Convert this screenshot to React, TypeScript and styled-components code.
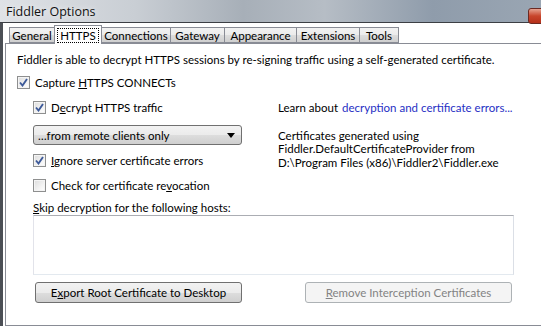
import styled, { createGlobalStyle } from 'styled-components';

const GlobalStyle = createGlobalStyle`
  html, body {
    margin: 0;
    padding: 0;
    background: #ffffff;
  }
  body {
    font-family: Lato, "Liberation Sans", sans-serif;
    font-size: 11.5px;
    color: #000;
  }
`;

const tabs = [
  { name: 'General', width: 46 },
  { name: 'HTTPS', width: 48 },
  { name: 'Connections', width: 70 },
  { name: 'Gateway', width: 55 },
  { name: 'Appearance', width: 73 },
  { name: 'Extensions', width: 64 },
  { name: 'Tools', width: 40 },
];

function Check({ checked }: { checked?: boolean }) {
  return (
    <Box>
      {checked && (
        <svg width="9" height="9" viewBox="0 0 9 9">
          <path d="M1 4.5 L3.5 7.5 L8 1" fill="none" stroke="#3d5a99" strokeWidth="1.9" />
        </svg>
      )}
    </Box>
  );
}

function App() {
  return (
    <Window>
      <GlobalStyle />
      <TitleBar>
        <Title>Fiddler Options</Title>
        <CloseButton />
      </TitleBar>
      <Body>
        <TabStrip>
          {tabs.map((t) => (
            <Tab key={t.name} $active={t.name === 'HTTPS'} $w={t.width}>
              {t.name === 'HTTPS' ? <Focus>{t.name}</Focus> : t.name}
            </Tab>
          ))}
        </TabStrip>
        <Panel>
          <Intro>
            Fiddler is able to decrypt HTTPS sessions by re-signing traffic using a self-generated certificate.
          </Intro>
          <CheckRow>
            <Check checked />
            <span>
              Capture <u>H</u>TTPS CONNECTs
            </span>
          </CheckRow>
          <Columns>
            <LeftCol>
              <CheckRow>
                <Check checked />
                <span>
                  D<u>e</u>crypt HTTPS traffic
                </span>
              </CheckRow>
              <Select>
                <span>…from remote clients only</span>
                <svg width="8" height="5" viewBox="0 0 8 5">
                  <path d="M0 0 H8 L4 5 Z" fill="#000" />
                </svg>
              </Select>
              <CheckRow>
                <Check checked />
                <span>
                  <u>I</u>gnore server certificate errors
                </span>
              </CheckRow>
              <CheckRow>
                <Check />
                <span>
                  Check for certificate re<u>v</u>ocation
                </span>
              </CheckRow>
            </LeftCol>
            <RightCol>
              <LearnLine>
                Learn about <Link>decryption and certificate errors...</Link>
              </LearnLine>
              <CertInfo>
                Certificates generated using
                <br />
                Fiddler.DefaultCertificateProvider from
                <br />
                D:\Program Files (x86)\Fiddler2\Fiddler.exe
              </CertInfo>
            </RightCol>
          </Columns>
          <Hosts>
            <Label>
              <u>S</u>kip decryption for the following hosts:
            </Label>
            <TextArea />
            <ButtonRow>
              <Button>
                E<u>x</u>port Root Certificate to Desktop
              </Button>
              <Button disabled>
                <u>R</u>emove Interception Certificates
              </Button>
            </ButtonRow>
          </Hosts>
        </Panel>
      </Body>
    </Window>
  );
}

export default App;

const Window = styled.div`
  width: 541px;
  height: 326px;
  overflow: hidden;
  display: flex;
  flex-direction: column;
  background: #fff;
`;

const TitleBar = styled.div`
  height: 22px;
  flex: none;
  display: flex;
  align-items: center;
  justify-content: space-between;
  background: linear-gradient(90deg, #dfe2e6 0%, #c9ced4 25%, #a7afb8 45%, #b6bdc5 60%, #8f9cab 80%, #9aa6b3 100%);
  border-bottom: 1px solid #3c3f44;
`;

const Title = styled.div`
  padding-left: 6px;
  font-family: "Open Sans", sans-serif;
  font-size: 12.5px;
  color: #111;
  text-shadow: 0 0 6px rgba(255, 255, 255, 0.9);
`;

const CloseButton = styled.div`
  width: 14px;
  height: 14px;
  margin-top: 10px;
  margin-right: -3px;
  border-radius: 3px;
  background: linear-gradient(180deg, #e6a290 0%, #c8452c 50%, #b5301a 100%);
  border: 1px solid #6b2a22;
`;

const Body = styled.div`
  flex: 1;
  display: flex;
  flex-direction: column;
  border-left: 3px solid #4b4f55;
  padding-left: 2px;
  padding-top: 1px;
`;

const TabStrip = styled.div`
  display: flex;
  align-items: flex-end;
  height: 19px;
  padding-left: 4px;
  position: relative;
  z-index: 1;
`;

const Tab = styled.div<{ $active?: boolean; $w: number }>`
  width: ${(p) => p.$w}px;
  box-sizing: border-box;
  height: ${(p) => (p.$active ? '19px' : '16px')};
  margin-bottom: ${(p) => (p.$active ? '-1px' : '0')};
  margin-left: -1px;
  display: flex;
  align-items: center;
  justify-content: center;
  border: 1px solid #898c95;
  border-bottom: ${(p) => (p.$active ? 'none' : '1px solid #898c95')};
  background: ${(p) => (p.$active ? '#fff' : 'linear-gradient(180deg, #f2f2f2 0%, #ebebeb 50%, #dddddd 51%, #cfcfcf 100%)')};
  position: relative;
  z-index: ${(p) => (p.$active ? 2 : 1)};
  &:first-child {
    margin-left: 0;
  }
`;

const Focus = styled.span`
  outline: 1px dotted #000;
  padding: 0 2px;
  line-height: 13px;
`;

const Panel = styled.div`
  flex: 1;
  width: 600px;
  border: 1px solid #898c95;
  padding: 8px 0 0 11px;
  box-sizing: border-box;
`;

const Intro = styled.div`
  height: 15px;
  line-height: 15px;
  white-space: nowrap;
  margin-bottom: 3px;
`;

const Box = styled.span`
  width: 11px;
  height: 11px;
  flex: none;
  border: 1px solid #8e8f8f;
  background: linear-gradient(135deg, #dcdcdc 0%, #f6f6f6 70%, #ffffff 100%);
  box-shadow: inset 0 0 0 1px #f4f4f4;
  display: flex;
  align-items: center;
  justify-content: center;
`;

const CheckRow = styled.div`
  display: flex;
  align-items: center;
  gap: 5px;
  height: 25px;
  white-space: nowrap;
`;

const Columns = styled.div`
  display: grid;
  grid-template-columns: 245px 1fr;
  padding-left: 16px;
`;

const LeftCol = styled.div`
  display: flex;
  flex-direction: column;
`;

const RightCol = styled.div`
  display: flex;
  flex-direction: column;
`;

const Select = styled.div`
  width: 209px;
  height: 20px;
  box-sizing: border-box;
  margin: 5px 0 3px;
  padding: 0 6px 0 4px;
  display: flex;
  align-items: center;
  justify-content: space-between;
  border: 1px solid #707070;
  border-radius: 3px;
  background: linear-gradient(180deg, #f2f2f2 0%, #ebebeb 50%, #dddddd 51%, #cfcfcf 100%);
`;

const LearnLine = styled.div`
  height: 25px;
  display: flex;
  align-items: center;
  white-space: nowrap;
`;

const Link = styled.span`
  color: #1f2fc4;
  margin-left: 4px;
`;

const CertInfo = styled.div`
  margin-top: 9px;
  line-height: 13.3px;
  white-space: nowrap;
`;

const Hosts = styled.div`
  display: flex;
  flex-direction: column;
  padding-left: 16px;
  margin-top: 2px;
`;

const Label = styled.div`
  height: 15px;
  line-height: 16px;
`;

const TextArea = styled.div`
  width: 481px;
  height: 60px;
  box-sizing: border-box;
  border: 1px solid #abadb3;
  border-left-color: #e2e3ea;
  border-bottom-color: #e3e9ef;
  border-right-color: #dbdfe6;
  background: #fff;
`;

const ButtonRow = styled.div`
  display: flex;
  gap: 63px;
  padding-left: 2px;
  margin-top: 7px;
`;

const Button = styled.button`
  width: 207px;
  height: 21px;
  padding: 0;
  font: inherit;
  border-radius: 3px;
  border: 1px solid #707070;
  color: #000;
  background: linear-gradient(180deg, #f2f2f2 0%, #ebebeb 50%, #dddddd 51%, #cfcfcf 100%);
  &:disabled {
    border-color: #adb2b5;
    background: #f4f4f4;
    color: #838383;
  }
`;
